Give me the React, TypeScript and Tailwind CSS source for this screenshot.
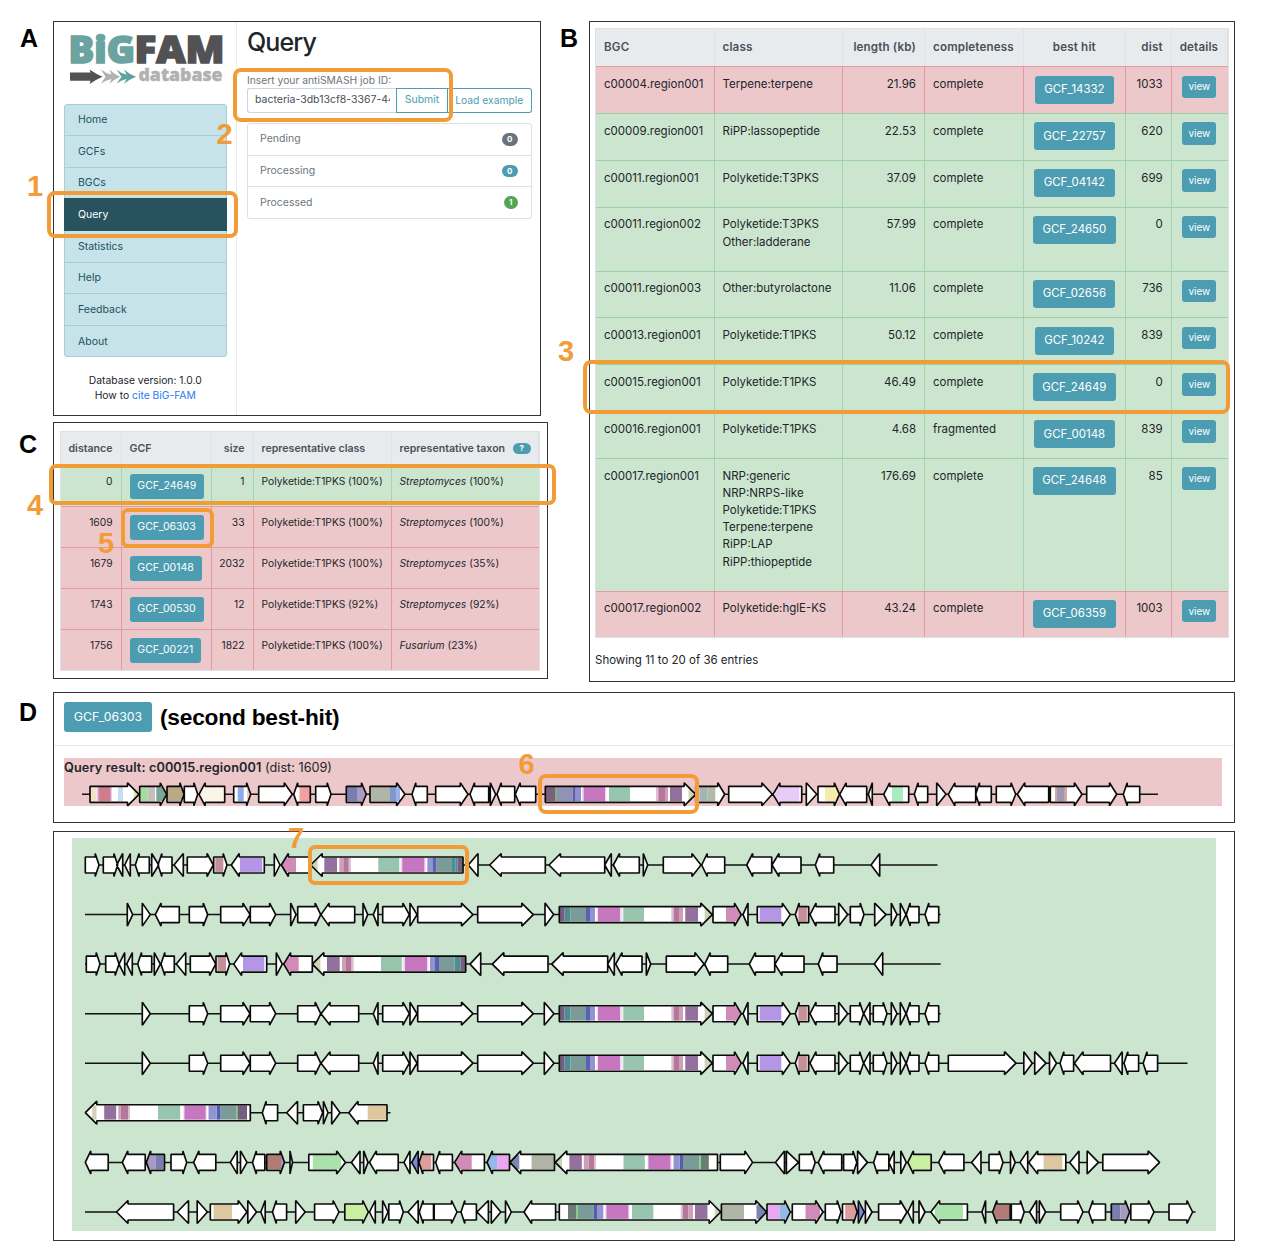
import React from "react";

/* ---------- gene cluster tracks ---------- */

type Domain = [number, number, string];
type Track = { y: number; line: [number, number]; genes: string; domains: Domain[] };

const PINK = "#d08bb9";
const VIOLET = "#b596e6";
const ROSE = "#c58f98";
const TAN = "#dcc79e";
const OLIVE = "#b0b6a5";
const SLATE = "#7a85b2";
const LILAC = "#a59ac0";
const INDIGO = "#7a7db0";

// Domain offsets are measured from the tail of the long synthase gene.
const SYNTHASE_A: Domain[] = [
  [0.3, 5.3, "#735f7e"], [5.3, 7.7, "#5a8496"], [7.7, 11, "#45928f"], [11, 26.7, "#7b9b98"],
  [26.7, 30.7, "#5a62b4"], [30.7, 35.7, "#9393d2"], [37.3, 62.5, "#f0d9f0"], [38.7, 60.7, "#c777c0"],
  [63, 64, "#e2efe8"], [64, 84.7, "#98c5ad"], [112, 114.3, "#dcbfd3"], [114.3, 119.7, "#b5789a"],
  [119.7, 123.7, "#cf9fb8"], [126, 138.7, "#94709e"], [145.3, 153, "#cfd3b8"],
];
const SYNTHASE_B: Domain[] = [
  [8.7, 16.7, "#6a7d74"], [16.7, 18.3, "#79d47a"], [18.3, 34.5, "#7b9b98"], [34.5, 37.7, "#4f5fae"],
  [37.7, 44, "#9393d2"], [45.8, 70, "#f0d9f0"], [47.2, 69, "#c777c0"], [72.7, 94, "#98c5ad"],
  [121.5, 123.5, "#dcbfd3"], [123.5, 129, "#b5789a"], [129, 133.7, "#cf9fb8"], [135.7, 148.1, "#94709e"],
  [155.5, 162, "#cfd3b8"],
];
const SYNTHASE_C: Domain[] = [
  [3.3, 12.4, "#735f7e"], [12.4, 13.8, "#6cba60"], [13.8, 29.8, "#7b9b98"], [29.8, 33.8, "#4f5fae"],
  [33.8, 41.8, "#9393d2"], [43.5, 67, "#f0d9f0"], [44.7, 65.8, "#c777c0"], [70.1, 92.3, "#98c5ad"],
  [120.3, 122.1, "#dcbfd3"], [122.1, 129.4, "#b5789a"], [129.4, 132, "#cf9fb8"], [134.1, 146.1, "#94709e"],
  [153.8, 158.1, "#cfd3b8"],
];

const fwd = (tail: number, ds: Domain[]): Domain[] => ds.map(([a, b, c]) => [tail + a, tail + b, c]);
const rev = (tail: number, ds: Domain[]): Domain[] => ds.map(([a, b, c]) => [tail - b, tail - a, c]);

const queryTrack: Track = {
  y: 794.3,
  line: [82, 1158],
  genes:
    "90-139> 139.7-166.7> 167-184> 184.3-197.7> 199-224.7< 233.7-250.7> 258.7-292.3> 293.7-310.3< 315.7-331> 346.3-366.3> 370-405> 412-427.3< 435.7-468> 470-488.7< 490.3-495.7> 497-514.7< 515.3-535.7< 545.3-695.7> 695.7-724.7> 728.7-772.3> 773-801.7< 806.3-816.7> 818-839.5> 839.7-866.7< 868.3-872.3< 883.7-908.7< 914.3-927.7< 936.7-946> 948.3-975.7< 975.7-991.3< 996.3-1015.7> 1017.3-1048.7< 1050.3-1082> 1086.7-1116.7> 1123.3-1139.7<",
  domains: [
    [90, 96.7, "#f5dfc9"], [97.5, 111.5, "#d795c8"], [99.3, 110, "#cf7d8b"], [118, 123, "#c5dff0"], [133.7, 139, "#d8e8a0"],
    [140.3, 147.7, "#a3dc9c"], [147.7, 155, "#c5c0bb"], [156.3, 167, "#78a898"], [167, 184, "#baa985"],
    [199, 224.7, "#f9f5e9"], [237.7, 243.7, "#8badec"], [247, 251, "#f3d3c0"], [299.5, 310.3, "#f2a1a1"],
    [346.3, 357, INDIGO], [357, 366.3, "#a89bc4"], [370, 390, OLIVE], [390, 396.7, "#7f98d3"], [396.7, 400, "#9bb0e8"],
    [545.3, 555, "#7b5f80"], [555, 557, "#7ab574"], [557, 572.7, "#9193b5"], [572.7, 575.7, "#5a5fae"], [575.7, 581, "#9090d0"],
    [582, 606.3, "#f0d9f0"], [583.7, 605, "#c777c0"], [609, 630, "#98c5ad"], [656, 658.3, "#dcbfd3"], [658.3, 665, "#b5789a"],
    [665, 668, "#cf9fb8"], [670, 682, "#94709e"], [688.5, 695.7, "#cfd3b8"],
    [699.3, 707.7, "#a2b4b4"], [707.7, 715.3, "#b2b9a7"], [775, 799.3, "#e8cbf7"], [825, 839.5, "#f4ebac"],
    [892, 903, "#a8ecc0"], [1055, 1067, "#dba898"], [1057, 1064.3, "#9b97b5"],
  ],
};

const forwardTail = "713-741.3> 743-748< 757.3-790.3> 795.3-808.7< 810-835< 838.7-847.7>";
const forwardTailDomains: Domain[] = [[726, 741.3, PINK], [759.7, 781.3, VIOLET], [797.5, 807.7, "#e3c8ce"], [798.7, 806.7, ROSE]];
const rowFourGenes =
  "142.3-150.3> 189.3-207.7> 220.7-250> 250.3-275.7> 297.7-320.7> 321-358.7< 373.3-378< 382.7-409.3> 410-417> 417.7-473> 477.7-533.3> 544.3-554> 559.3-712.3> " +
  forwardTail +
  " 850.3-863.5> 863.7-870< 873.3-887> 891.3-897> 900.3-906> 906.3-919< 925-938.7<";

const familyTracks: Track[] = [
  {
    y: 865,
    line: [85, 937.5],
    genes:
      "85.3-99> 103.3-117.7> 116.7-122.7< 124.7-130.3< 135.3-149.3< 151.7-158.7> 158-172< 174-183.3< 187.3-213.3> 213.7-227> 231.3-264.3< 274.3-280> 281.3-310.7< 310.7-463< 468.3-478< 489.7-545.3< 549-604.7< 604.7-611.3< 613.3-639.3< 643.3-647.7> 663.3-701> 701.7-724.7< 746.7-771.7< 772-801< 815.3-833.7< 871-879.7<",
    domains: [[215.3, 223.3, ROSE], [240, 262.3, VIOLET], [281, 296, PINK], ...rev(463, SYNTHASE_A)],
  },
  {
    y: 914.6,
    line: [85, 940.7],
    genes:
      "127.3-132.7> 142.3-150.3> 155.3-179.3< 189.3-207.7> 220.7-250> 250.3-275.7> 290.7-296> 297.7-320.7> 321-354.7< 363-367.7> 373.3-378< 382.7-409.3> 410-417> 417.7-473> 477.7-533.3> 545-553.7> 559.3-712.3> " +
      forwardTail +
      " 850.3-864> 874.7-886> 891.3-897> 900.3-906> 906.3-919< 925-938.7<",
    domains: [...fwd(559.3, SYNTHASE_A), ...forwardTailDomains],
  },
  {
    y: 964.1,
    line: [85, 940.7],
    genes:
      "86.3-100> 105.7-119> 119-124.7< 126.7-132.3< 137.7-151.7< 154.3-160.3> 161-174.3< 176.3-185.7< 190.3-215.7> 216-229.7> 233.7-266.7< 276.3-282.3> 283.7-312.3< 312.3-465.7< 470-480.7< 492.3-548< 551.7-607.7< 607.7-614.3< 615.7-642< 646.3-650.7> 666.3-704> 704.7-727.7< 749.3-774.7< 775-804< 818.3-837< 874.3-882.7<",
    domains: [[217.5, 226, ROSE], [243, 264.3, VIOLET], [283.7, 298.7, PINK], ...rev(465.7, SYNTHASE_A)],
  },
  { y: 1013.7, line: [85, 940.7], genes: rowFourGenes, domains: [...fwd(559.3, SYNTHASE_A), ...forwardTailDomains] },
  {
    y: 1063.2,
    line: [85, 1187.5],
    genes:
      rowFourGenes +
      " 948.3-1016> 1023.8-1032.3> 1034.7-1046> 1049.5-1056.5> 1060-1073.6< 1074.4-1110.5< 1114.4-1122.2< 1124-1138.6< 1143.2-1157.6<",
    domains: [...fwd(559.3, SYNTHASE_A), ...forwardTailDomains],
  },
  {
    y: 1112.7,
    line: [85, 390.5],
    genes: "85.3-250.3< 262.3-277.6< 286.7-297.5< 303.4-322.6> 323.4-328> 331.7-340> 348.8-387<",
    domains: [[367.7, 386.3, TAN], ...rev(250.3, SYNTHASE_C)],
  },
  {
    y: 1162.4,
    line: [85, 1160],
    genes:
      "85.3-108.2< 122.3-145.2< 146.3-164.5< 171-186.7> 193.6-215.8< 230.3-237.2< 240.5-247> 252.5-264.8< 266.7-284.5> 290-292.5> 308.8-345.5> 351.4-360< 363.7-368> 369.5-398.2< 404-410< 411.7-418.2< 419-433.5< 435.7-452.4< 454.6-484.4< 487-509.5< 510-554.5< 555.3-717.5< 720.3-752.6> 775.5-784.5< 786.4-798.5> 799.3-815.2> 818.3-841.7< 843.6-856.8> 857.6-867.4> 873.6-888.8< 888.8-894.2< 900.8-906.3> 907.8-931.2< 938.6-963.9< 971.6-981< 989-1003> 1010.5-1015.2> 1020-1027.7< 1028.8-1065.8< 1069.7-1079< 1087.2-1098.5> 1102.8-1159.6>",
    domains: [
      [146.3, 155.8, LILAC], [155.8, 163.8, INDIGO], [266.7, 281, "#b27a75"], [281, 284.5, LILAC], [312.8, 341, "#a9e3ab"],
      [411.7, 418.2, "#7c86dc"], [419, 431.3, "#dc9e9a"], [456, 471.7, PINK], [488, 497.1, "#95b9e6"], [497.1, 509.5, "#eaa6f0"],
      [510, 519.3, SLATE], [531.6, 554.5, OLIVE], ...rev(717.5, SYNTHASE_B), [907.8, 931.2, "#c9f0a0"], [1043.6, 1062.3, TAN],
    ],
  },
  {
    y: 1212,
    line: [85, 1195.5],
    genes:
      "116.5-173.6< 177.2-188.5< 197.2-207.4> 210.3-247> 247.8-256.5> 260.8-265.2< 272.5-286.6< 295.7-305.2> 314.6-339> 344.8-368.4> 369.5-375.3< 382.6-388> 388.8-403.3> 408-418.2< 419.3-433.5< 434.2-457> 461-476.4< 477-488.4< 491.3-500.8> 505.5-511.3> 524-555.6< 559.3-720.7> 721.4-766.6> 767-790.3> 792.3-823> 825.3-841> 842.5-857.2> 858.4-864.2> 865.4-872> 878.6-907> 907.8-913.3< 919-925> 930.8-967.4< 982-985.6< 992.6-1010.2< 1011.3-1024.2> 1029.6-1036.6< 1039.3-1045.6> 1060.7-1083> 1088.8-1105.5< 1111.3-1129.6> 1130.8-1154> 1169-1192.6>",
    domains: [
      [213.6, 232, TAN], [344.8, 368.4, "#c9f0a0"], ...fwd(559.3, SYNTHASE_B), [721.4, 744, OLIVE], [756.5, 766.6, SLATE],
      [767, 779.4, "#eaa6f0"], [779.4, 789.5, "#95b9e6"], [805.5, 820, PINK], [845.2, 857.2, "#dc9e9a"], [858.4, 864.2, "#7c86dc"],
      [934.7, 963, "#a9e3ab"], [994, 1010.2, "#b27a75"], [992.6, 994, LILAC], [1111.3, 1120.3, INDIGO], [1120.3, 1129.6, LILAC],
    ],
  },
];

function genePath(a: number, b: number, dir: string, y: number) {
  const w = b - a;
  const head = w < 12.3 ? w : Math.min(11.5, Math.max(3.8, w * 0.24));
  const tail = dir === ">" ? a : b;
  const tip = dir === ">" ? b : a;
  const neck = dir === ">" ? b - head : a + head;
  if (head === w) return `M${tail} ${y - 11.5}L${tip} ${y}L${tail} ${y + 11.5}Z`;
  return `M${tail} ${y - 8}H${neck}V${y - 11.5}L${tip} ${y}L${neck} ${y + 11.5}V${y + 8}H${tail}Z`;
}

function TrackDrawing({ track, id }: { track: Track; id: string }) {
  const paths = track.genes.split(" ").map((g) => {
    const [a, b] = g.slice(0, -1).split("-").map(Number);
    return genePath(a, b, g.slice(-1), track.y);
  });
  const all = paths.join("");
  return (
    <g>
      <clipPath id={id}>
        <path d={all} />
      </clipPath>
      <path d={`M${track.line[0]} ${track.y}H${track.line[1]}`} stroke="#111" strokeWidth="1.5" />
      <path d={all} fill="#fff" />
      <g clipPath={`url(#${id})`}>
        {track.domains.map(([a, b, c], i) => (
          <rect key={i} x={a} y={track.y - 7.3} width={b - a} height={14.2} fill={c} />
        ))}
      </g>
      <path d={all} fill="none" stroke="#0a0a0a" strokeWidth="1.65" strokeLinejoin="bevel" />
    </g>
  );
}

/* ---------- small pieces ---------- */

function PanelLabel({ children, className }: { children: string; className: string }) {
  return (
    <div className={`shrink-0 font-['Liberation_Sans',sans-serif] text-[25px] leading-[28px] font-bold text-black ${className}`}>
      {children}
    </div>
  );
}

function Highlight({ className }: { className: string }) {
  return <div className={`pointer-events-none absolute border-4 border-[#f19c37] ${className}`} />;
}

function Step({ n, className }: { n: number; className: string }) {
  return (
    <div className={`absolute font-['Liberation_Sans',sans-serif] text-[29px] leading-[29px] font-bold text-[#f19c37] ${className}`}>{n}</div>
  );
}

function Logo() {
  return (
    <svg className="block overflow-visible" width="156" height="54" viewBox="68 33 156 54">
      <g fontFamily="'Open Sans', sans-serif" fontWeight="800">
        <text x="68.5" y="63.3" fontSize="37" fill="#6aa39f" stroke="#6aa39f" strokeWidth="1.6" textLength="66.5" lengthAdjust="spacingAndGlyphs">BiG</text>
        <text x="134.5" y="63.3" fontSize="37" fill="#525254" stroke="#525254" strokeWidth="1.6" textLength="90" lengthAdjust="spacingAndGlyphs">FAM</text>
        <text x="138.5" y="81" fontSize="17.500" fill="#b1b1b1" stroke="#b1b1b1" strokeWidth="0.400" textLength="84" lengthAdjust="spacingAndGlyphs">database</text>
      </g>
      <path d="M70 72.500H90.500L89.500 69.500Q96 74 102.500 76.700Q96 79.500 89.500 84L90.500 80.700H70Z" fill="#525254" />
      <path d="M101 69.500Q106 73.500 111.500 74.500L109.500 69.500Q114 74 120 76.700Q114 79.500 109.500 83.800L111.500 79Q106 80 101 83.800L105.500 76.700Z" fill="#b1b1b1" />
      <path d="M116.500 69.500Q121 73.500 126.500 74.500L124 69.500Q129 74 136 76.700Q129 79.500 124 83.800L126.500 79Q121 80 116.500 83.800L121.500 76.700Z" fill="#5fa39e" />
    </svg>
  );
}

/* ---------- panel A ---------- */

const navItems = ["Home", "GCFs", "BGCs", "Query", "Statistics", "Help", "Feedback", "About"];
const jobs = [
  { name: "Pending", count: 0, badge: "bg-[#6a737c]" },
  { name: "Processing", count: 0, badge: "bg-[#4c9db1]" },
  { name: "Processed", count: 1, badge: "bg-[#52a552]" },
];

function QueryPanel() {
  return (
    <div className="flex h-[395px] w-[488px] border border-[#333] bg-white">
      <aside className="flex w-[183px] shrink-0 flex-col border-r border-[#e9eaec] pl-[10px]">
        <div className="mt-[11px] ml-[4px]">
          <Logo />
        </div>
        <nav className="mt-[17px] h-[253px] w-[162.500px] rounded-[3px] border border-[#a8cdd4] bg-[#c6e3ea] text-[10.500px] text-[#23505b]">
          {navItems.map((n) =>
            n === "Query" ? (
              <div key={n} className="-mx-px -mt-[1px] flex h-[33px] items-center bg-[#28525e] pl-[14px] text-white">{n}</div>
            ) : (
              <div key={n} className="flex h-[31.600px] items-center border-b border-[#a8cdd4] pl-[13px] last:border-0">{n}</div>
            ),
          )}
        </nav>
        <div className="mt-[16px] w-[162.500px] text-center text-[10.300px] leading-[15.300px] text-[#212529]">
          <div>Database version: 1.0.0</div>
          <div>
            How to <span className="text-[#2a7bf0]">cite BiG-FAM</span>
          </div>
        </div>
      </aside>
      <main className="w-[295px] pt-[3.500px] pl-[10px]">
        <h1 className="text-[25px] leading-[34px] font-medium tracking-[-0.900px] text-[#212529]">Query</h1>
        <div className="mt-[12.500px] mb-[0.500px] text-[10.300px] leading-[16px] text-[#6c757d]">Insert your antiSMASH job ID:</div>
        <div className="flex h-[24.500px] text-[10.500px]">
          <div className="flex w-[149px] items-center rounded-l-[3px] border border-r-0 border-[#ced4da] pr-[6px] pl-[7px] text-[#495057]">
            <span className="block w-full overflow-hidden whitespace-nowrap">bacteria-3db13cf8-3367-44a1</span>
          </div>
          <div className="flex w-[52px] items-center justify-center border border-[#4c9db1] text-[#4c9db1]">Submit</div>
          <div className="flex w-[83.500px] items-center justify-center rounded-r-[3px] border border-l-0 border-[#4c9db1] text-[10.300px] text-[#4c9db1]">Load example</div>
        </div>
        <div className="mt-[10.500px] w-[284.500px] rounded-[3px] border border-[#dfdfdf] text-[10.500px] text-[#6c757d]">
          {jobs.map((j) => (
            <div key={j.name} className="flex h-[31.500px] items-center justify-between border-b border-[#dfdfdf] pr-[13px] pl-[12px] last:h-[31px] last:border-0">
              <span>{j.name}</span>
              <span className={`rounded-full px-[5px] text-[8px] leading-[12.500px] font-bold text-white ${j.badge}`}>{j.count}</span>
            </div>
          ))}
        </div>
      </main>
    </div>
  );
}

/* ---------- panel C ---------- */

const families = [
  { d: "0", gcf: "GCF_24649", size: "1", cls: "Polyketide:T1PKS (100%)", taxon: "Streptomyces", pct: "(100%)" },
  { d: "1609", gcf: "GCF_06303", size: "33", cls: "Polyketide:T1PKS (100%)", taxon: "Streptomyces", pct: "(100%)" },
  { d: "1679", gcf: "GCF_00148", size: "2032", cls: "Polyketide:T1PKS (100%)", taxon: "Streptomyces", pct: "(35%)" },
  { d: "1743", gcf: "GCF_00530", size: "12", cls: "Polyketide:T1PKS (92%)", taxon: "Streptomyces", pct: "(92%)" },
  { d: "1756", gcf: "GCF_00221", size: "1822", cls: "Polyketide:T1PKS (100%)", taxon: "Fusarium", pct: "(23%)" },
];

function FamiliesPanel() {
  return (
    <div className="h-[257px] w-[495px] border border-[#333] bg-white pt-[7.500px] pl-[6px]">
      <div className="w-[479.500px] border border-[#dee2e6] text-[10.250px] text-[#212529]">
        <div className="grid h-[34.200px] grid-cols-[60.500px_90.500px_41.500px_138px_1fr] items-stretch bg-[#e8ebee] text-[10.600px] font-semibold text-[#495057] [&>div]:flex [&>div]:items-center [&>div]:border-r [&>div]:border-[#dee2e6]">
          <div className="justify-end pr-[8px]">distance</div>
          <div className="pl-[8px]">GCF</div>
          <div className="justify-end pr-[8px]">size</div>
          <div className="pl-[8px]">representative class</div>
          <div className="justify-between pr-[7px] pl-[8px]">
            representative taxon
            <span className="rounded-full bg-[#4c9db1] px-[6.500px] text-[8px] leading-[11.500px] font-bold text-white">?</span>
          </div>
        </div>
        {families.map((f, i) => (
          <div
            key={f.gcf}
            className={`grid h-[41px] grid-cols-[60.500px_90.500px_41.500px_138px_1fr] border-b border-[#e49aa2] leading-[16px] last:h-[40.500px] last:border-b-0 [&>div]:border-r [&>div]:pt-[7.500px] [&>div:last-child]:border-r-0 ${
              i === 0 ? "bg-[#cce5cf] [&>div]:border-[#a5d5ac]" : "bg-[#ecc8cb] [&>div]:border-[#e49aa2]"
            }`}
          >
            <div className="pr-[8px] text-right">{f.d}</div>
            <div className="pl-[8px]">
              <span className="mt-[0.500px] flex h-[25px] w-fit items-center rounded-[3px] bg-[#4c9db1] px-[7.800px] text-[10.500px] text-white">{f.gcf}</span>
            </div>
            <div className="pr-[8px] text-right">{f.size}</div>
            <div className="pl-[8px]">{f.cls}</div>
            <div className="pl-[8px]">
              <i>{f.taxon}</i> {f.pct}
            </div>
          </div>
        ))}
      </div>
    </div>
  );
}

/* ---------- panel B ---------- */

const regions = [
  { bgc: "c00004.region001", cls: ["Terpene:terpene"], len: "21.96", comp: "complete", hit: "GCF_14332", dist: "1033", red: true },
  { bgc: "c00009.region001", cls: ["RiPP:lassopeptide"], len: "22.53", comp: "complete", hit: "GCF_22757", dist: "620" },
  { bgc: "c00011.region001", cls: ["Polyketide:T3PKS"], len: "37.09", comp: "complete", hit: "GCF_04142", dist: "699" },
  { bgc: "c00011.region002", cls: ["Polyketide:T3PKS", "Other:ladderane"], len: "57.99", comp: "complete", hit: "GCF_24650", dist: "0" },
  { bgc: "c00011.region003", cls: ["Other:butyrolactone"], len: "11.06", comp: "complete", hit: "GCF_02656", dist: "736" },
  { bgc: "c00013.region001", cls: ["Polyketide:T1PKS"], len: "50.12", comp: "complete", hit: "GCF_10242", dist: "839" },
  { bgc: "c00015.region001", cls: ["Polyketide:T1PKS"], len: "46.49", comp: "complete", hit: "GCF_24649", dist: "0" },
  { bgc: "c00016.region001", cls: ["Polyketide:T1PKS"], len: "4.68", comp: "fragmented", hit: "GCF_00148", dist: "839" },
  {
    bgc: "c00017.region001",
    cls: ["NRP:generic", "NRP:NRPS-like", "Polyketide:T1PKS", "Terpene:terpene", "RiPP:LAP", "RiPP:thiopeptide"],
    len: "176.69", comp: "complete", hit: "GCF_24648", dist: "85",
  },
  { bgc: "c00017.region002", cls: ["Polyketide:hglE-KS"], len: "43.24", comp: "complete", hit: "GCF_06359", dist: "1003", red: true },
];

function RegionsPanel() {
  return (
    <div className="h-[661px] w-[646px] border border-[#333] bg-white pt-[6px] pl-[5px] text-[#212529]">
      <div className="w-[634px] border border-[#dee2e6] text-[11.500px]">
        <div className="grid h-[37.800px] grid-cols-[118.500px_128px_82.500px_99px_101.700px_46px_1fr] bg-[#e8ebee] text-[11.600px] font-semibold tracking-[0.160px] text-[#495057] [&>div]:flex [&>div]:items-center [&>div]:border-r [&>div]:border-[#dee2e6] [&>div]:px-[8px]">
          <div>BGC</div>
          <div>class</div>
          <div className="justify-end whitespace-nowrap">length (kb)</div>
          <div>completeness</div>
          <div className="justify-center">best hit</div>
          <div className="justify-end">dist</div>
          <div>details</div>
        </div>
        {regions.map((r) => (
          <div
            key={r.bgc}
            className={`grid grid-cols-[118.500px_128px_82.500px_99px_101.700px_46px_1fr] border-t leading-[17.200px] [&>div]:border-r [&>div]:px-[8px] [&>div]:pt-[8.800px] [&>div]:pb-[19.800px] [&>div:last-child]:border-r-0 ${
              r.red
                ? "border-[#e49aa2] bg-[#ecc8cb] [&>div]:border-[#e49aa2]"
                : "border-[#9bd0a3] bg-[#cce5cf] [&>div]:border-[#a5d5ac]"
            }`}
          >
            <div>{r.bgc}</div>
            <div>
              {r.cls.map((c) => (
                <div key={c} className="whitespace-nowrap">{c}</div>
              ))}
            </div>
            <div className="text-right">{r.len}</div>
            <div>{r.comp}</div>
            <div>
              <div className="-mt-[0.600px] flex h-[17.800px] items-start justify-center">
                <span className="flex h-[28px] shrink-0 items-center rounded-[3px] bg-[#4c9db1] px-[9.500px] text-[11.450px] text-white">{r.hit}</span>
              </div>
            </div>
            <div className="text-right">{r.dist}</div>
            <div>
              <div className="-mt-[0.600px] flex h-[17.800px] items-start justify-center">
                <span className="-ml-[1px] flex h-[22.500px] w-[34px] shrink-0 items-center justify-center rounded-[3px] bg-[#4c9db1] text-[10px] text-white">view</span>
              </div>
            </div>
          </div>
        ))}
      </div>
      <div className="mt-[13px] text-[11.500px] leading-[18px]">Showing 11 to 20 of 36 entries</div>
    </div>
  );
}

/* ---------- page ---------- */

export default function App() {
  return (
    <div className="relative h-[1258px] w-[1262px] overflow-hidden bg-white pt-[20.500px] font-['Inter',sans-serif]">
      <div className="flex">
        <div className="flex w-[549px] flex-col">
          <div className="flex">
            <PanelLabel className="w-[53px] pt-[3px] pl-[20px]">A</PanelLabel>
            <QueryPanel />
          </div>
          <div className="mt-[6.500px] flex">
            <PanelLabel className="w-[53px] pt-[8px] pl-[19px]">C</PanelLabel>
            <FamiliesPanel />
          </div>
        </div>
        <PanelLabel className="w-[40px] pt-[3px] pl-[11px]">B</PanelLabel>
        <RegionsPanel />
      </div>

      <div className="mt-[10px] flex">
        <PanelLabel className="w-[53px] pt-[6px] pl-[19px]">D</PanelLabel>
        <div className="flex flex-col">
          <div className="h-[131px] w-[1182px] border border-[#333] bg-white">
            <div className="flex h-[53px] items-center border-b border-[#e4e6e8] pb-[3px] pl-[10px]">
              <span className="flex h-[30px] w-[88px] items-center justify-center rounded-[3px] bg-[#4c9db1] text-[12.300px] text-white">GCF_06303</span>
              <span className="ml-[8px] font-['Liberation_Sans',sans-serif] text-[22.700px] font-bold tracking-[-0.200px] text-black">(second best-hit)</span>
            </div>
            <div className="mt-[12px] ml-[10px] h-[48.500px] w-[1158px] bg-[#ecc8cb]">
              <div className="h-[18px] text-[12.700px] leading-[19px] text-[#212529]">
                <b className="font-semibold tracking-[0.120px]">Query result: c00015.region001</b> (dist: 1609)
              </div>
              <svg className="block" width="1158" height="31" viewBox="64 776 1158 31">
                <TrackDrawing track={queryTrack} id="query-genes" />
              </svg>
            </div>
          </div>
          <div className="mt-[8px] h-[410px] w-[1182px] border border-[#333] bg-white pt-[6px] pl-[18px]">
            <svg className="block bg-[#cce5cf]" width="1144" height="393" viewBox="72 838 1144 393">
              {familyTracks.map((t, i) => (
                <TrackDrawing key={i} track={t} id={`family-${i}`} />
              ))}
            </svg>
          </div>
        </div>
      </div>

      <Highlight className="top-[191px] left-[47px] h-[47px] w-[191px] rounded-[8px]" />
      <Highlight className="top-[68px] left-[233px] h-[54px] w-[220px] rounded-[8px]" />
      <Highlight className="top-[360px] left-[583px] h-[54px] w-[647px] rounded-[8px]" />
      <Highlight className="top-[464px] left-[49px] h-[41px] w-[507px] rounded-[7px]" />
      <Highlight className="top-[508px] left-[121px] h-[40px] w-[93px] rounded-[7px]" />
      <Highlight className="top-[774px] left-[538px] h-[40px] w-[161px] rounded-[8px]" />
      <Highlight className="top-[845px] left-[308px] h-[40px] w-[161px] rounded-[7px]" />
      <Step n={1} className="top-[171.500px] left-[27px]" />
      <Step n={2} className="top-[120px] left-[216.500px]" />
      <Step n={3} className="top-[337px] left-[558px]" />
      <Step n={4} className="top-[491px] left-[27px]" />
      <Step n={5} className="top-[529px] left-[98px]" />
      <Step n={6} className="top-[750px] left-[518.500px]" />
      <Step n={7} className="top-[824px] left-[288px]" />
    </div>
  );
}
